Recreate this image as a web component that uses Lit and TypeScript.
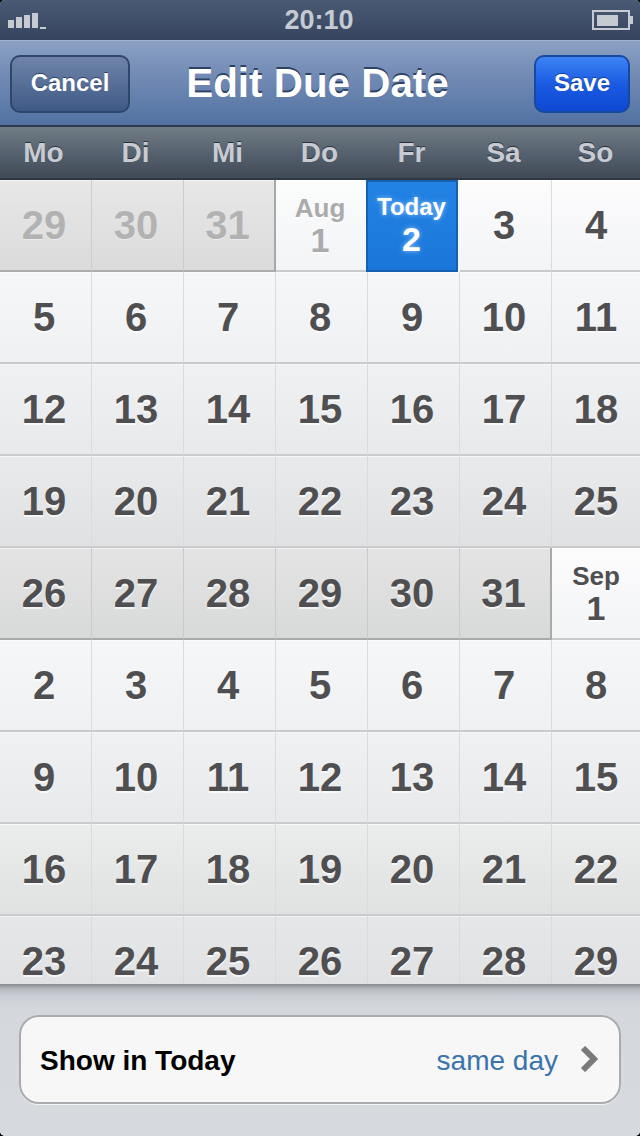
import { LitElement, html, css } from 'lit';
import { customElement } from 'lit/decorators.js';

type Cell = { top?: string; day: string; kind: '' | 'past' | 'bright' | 'shade' | 'today' | 'faded' };

const plain = (from: number, to: number, kind: Cell['kind'] = ''): Cell[] => {
  const out: Cell[] = [];
  for (let d = from; d <= to; d++) out.push({ day: String(d), kind });
  return out;
};

const CELLS: Cell[] = [
  ...plain(29, 31, 'past'),
  { top: 'Aug', day: '1', kind: 'faded' },
  { top: 'Today', day: '2', kind: 'today' },
  ...plain(3, 4, 'bright'),
  ...plain(5, 25),
  ...plain(26, 31, 'shade'),
  { top: 'Sep', day: '1', kind: 'bright' },
  ...plain(2, 29),
];

const WEEKDAYS = ['Mo', 'Di', 'Mi', 'Do', 'Fr', 'Sa', 'So'];

@customElement('app-root')
export class AppRoot extends LitElement {
  static styles = css`
    :host {
      display: block;
      width: 640px;
      height: 1136px;
      overflow: hidden;
      font-family: 'Liberation Sans', Arial, sans-serif;
      background: #000;
    }
    .screen {
      height: 1136px;
      overflow: hidden;
      border-radius: 5px;
      background: #d6d9de;
    }
    .status {
      height: 40px;
      box-sizing: border-box;
      padding: 0 6px 0 8px;
      display: grid;
      grid-template-columns: 1fr auto 1fr;
      align-items: center;
      background: linear-gradient(#4a5a74, #36435f);
      color: #c6cad3;
    }
    .time { font-size: 27px; font-weight: 700; margin-left: -4px; }
    .signal { display: block; }
    .battery { display: block; justify-self: end; }

    .nav {
      height: 87px;
      box-sizing: border-box;
      padding: 14px 10px 0;
      display: flex;
      justify-content: space-between;
      align-items: flex-start;
      position: relative;
      background: linear-gradient(#8ba0c3, #7089b3 45%, #5272a2);
      border-top: 1px solid #a3b4d0;
      border-bottom: 2px solid #2d3a50;
    }
    .title {
      position: absolute;
      left: 0;
      right: 5px;
      top: 18px;
      text-align: center;
      font-size: 40.4px;
      line-height: 48px;
      font-weight: 700;
      color: #fff;
      text-shadow: 0 -2px 0 #2e4266;
    }
    .btn {
      height: 58px;
      box-sizing: border-box;
      border-radius: 10px;
      padding-bottom: 2px;
      display: flex;
      align-items: center;
      justify-content: center;
      font-size: 24px;
      font-weight: 700;
      color: #fff;
    }
    .cancel {
      width: 120px;
      border: 2px solid #2f466b;
      background: linear-gradient(#6f84a8, #3f5a86);
      text-shadow: 0 -1px 0 #2e4266;
    }
    .save {
      width: 96px;
      border: 2px solid #174a9e;
      background: linear-gradient(#3d83f5, #1a5be2 50%, #0f48d2);
      text-shadow: 0 -1px 0 #123a9a;
    }

    .weekdays {
      height: 53px;
      box-sizing: border-box;
      display: grid;
      grid-template-columns: repeat(7, 92px);
      align-items: center;
      background: linear-gradient(#717c84, #56626f 50%, #414a57);
      border-bottom: 2px solid #2f3743;
      font-size: 28px;
      font-weight: 700;
      color: #c8ccd2;
      text-shadow: 0 -1px 0 #2b323c;
    }
    .weekdays span { text-align: center; padding: 1px 5px 0 0; }

    .grid {
      height: 804px;
      width: 644px;
      overflow: hidden;
      display: grid;
      grid-template-columns: repeat(7, 92px);
      grid-auto-rows: 92px;
      background: #f5f6f7;
    }
    .cell {
      box-sizing: border-box;
      padding-right: 3px;
      border-right: 1px solid #dadbdd;
      border-bottom: 2px solid #c9cacc;
      box-shadow: inset 0 1px 0 rgba(255, 255, 255, 0.5);
      display: flex;
      flex-direction: column;
      align-items: center;
      justify-content: center;
      color: #4f4f51;
      font-weight: 700;
      text-shadow: 0 2px 0 rgba(255, 255, 255, 0.7);
    }
    .r1, .r5 { background: linear-gradient(#f6f7f8, #eff0f2); }
    .r2, .r6 { background: linear-gradient(#f0f1f2, #e8e9eb); }
    .r3 { background: linear-gradient(#e9eaeb, #e0e1e2); }
    .r7 { background: linear-gradient(#ebecec, #e0e1e1); }
    .r8 { background: linear-gradient(#e6e7e8, #dfe0e1); }

    .num { font-size: 40px; line-height: 44px; }
    .top { font-size: 26px; line-height: 28px; margin-top: 1px; }
    .stack .num { font-size: 34px; line-height: 34px; margin-top: 1px; }
    .past {
      background: linear-gradient(#e7e7e8, #dbdbdc);
      color: #b2b2b3;
      border-right-color: #cdcdce;
      border-bottom-color: #adadae;
      text-shadow: 0 1px 0 rgba(255, 255, 255, 0.4);
    }
    .past.edge { border-right: 2px solid #a8a8a9; }
    .faded {
      background: linear-gradient(#fbfcfc, #f3f4f6);
      color: #ababac;
    }
    .bright { background: linear-gradient(#fcfcfd, #f3f4f6); }
    .shade {
      background: linear-gradient(#e4e4e5, #d8d9d9);
      border-right-color: #cbcbcd;
      border-bottom-color: #a9a9aa;
    }
    .shade.edge { border-right: 2px solid #a9a9aa; }
    .today {
      margin: 0 2px 0 -2px;
      background: linear-gradient(#2283e4, #1b76da);
      box-shadow: inset 0 0 0 2px #1660b0;
      border: none;
      padding: 0 1px 2px 0;
      color: #fff;
      text-shadow: 0 0 5px #8cc4ff;
    }
    .today .top { font-size: 24px; margin-top: -1px; }

    .footer {
      height: 152px;
      box-sizing: border-box;
      padding: 31px 19px 0;
      background: linear-gradient(#8a8e93, #b7bbc1 5px, #cbced4 12px, #d4d7dc 24px, #d6d9de);
    }
    .card {
      height: 89px;
      box-sizing: border-box;
      border: 2px solid #a9abae;
      border-radius: 20px;
      background: #f7f7f8;
      padding: 3px 21px 0 19px;
      display: flex;
      align-items: center;
      box-shadow: 0 1px 0 #f2f3f5;
    }
    .label { font-size: 28px; font-weight: 700; color: #000; flex: 1; }
    .value { font-size: 28px; color: #3a74ab; margin-right: 22px; }
    .chev { display: block; margin-top: -4px; }
  `;

  private _cellClass(c: Cell, i: number) {
    const edge = i === 2 || i === 33;
    const row = Math.floor(i / 7);
    return ['cell', c.kind || `r${row}`, c.top ? 'stack' : '', edge ? 'edge' : ''].join(' ');
  }

  render() {
    return html`
      <div class="screen">
        <div class="status">
          <svg class="signal" width="40" height="20" viewBox="0 0 40 20" aria-hidden="true">
            <rect x="0" y="10" width="6" height="8" fill="#c6cad3" />
            <rect x="8" y="7" width="6" height="11" fill="#c6cad3" />
            <rect x="16" y="5" width="6" height="13" fill="#c6cad3" />
            <rect x="24" y="3" width="6" height="15" fill="#c6cad3" />
            <rect x="32" y="17" width="6" height="2" fill="#c6cad3" />
          </svg>
          <div class="time">20:10</div>
          <svg class="battery" width="42" height="20" viewBox="0 0 42 20" aria-hidden="true">
            <rect x="1" y="1" width="36" height="18" fill="none" stroke="#c6cad3" stroke-width="2" />
            <rect x="5" y="5" width="21" height="11" fill="#c6cad3" />
            <rect x="37" y="6" width="4" height="8" fill="#c6cad3" />
          </svg>
        </div>
        <div class="nav">
          <div class="btn cancel">Cancel</div>
          <div class="title">Edit Due Date</div>
          <div class="btn save">Save</div>
        </div>
        <div class="weekdays">${WEEKDAYS.map((d) => html`<span>${d}</span>`)}</div>
        <div class="grid">
          ${CELLS.map(
            (c, i) => html`<div class=${this._cellClass(c, i)}>
              ${c.top ? html`<div class="top">${c.top}</div>` : ''}
              <div class="num">${c.day}</div>
            </div>`,
          )}
        </div>
        <div class="footer">
          <div class="card">
            <div class="label">Show in Today</div>
            <div class="value">same day</div>
            <svg class="chev" width="18" height="26" viewBox="0 0 18 26" aria-hidden="true">
              <path d="M3 2 L14 13 L3 24" fill="none" stroke="#7a7a7a" stroke-width="6" />
            </svg>
          </div>
        </div>
      </div>
    `;
  }
}
